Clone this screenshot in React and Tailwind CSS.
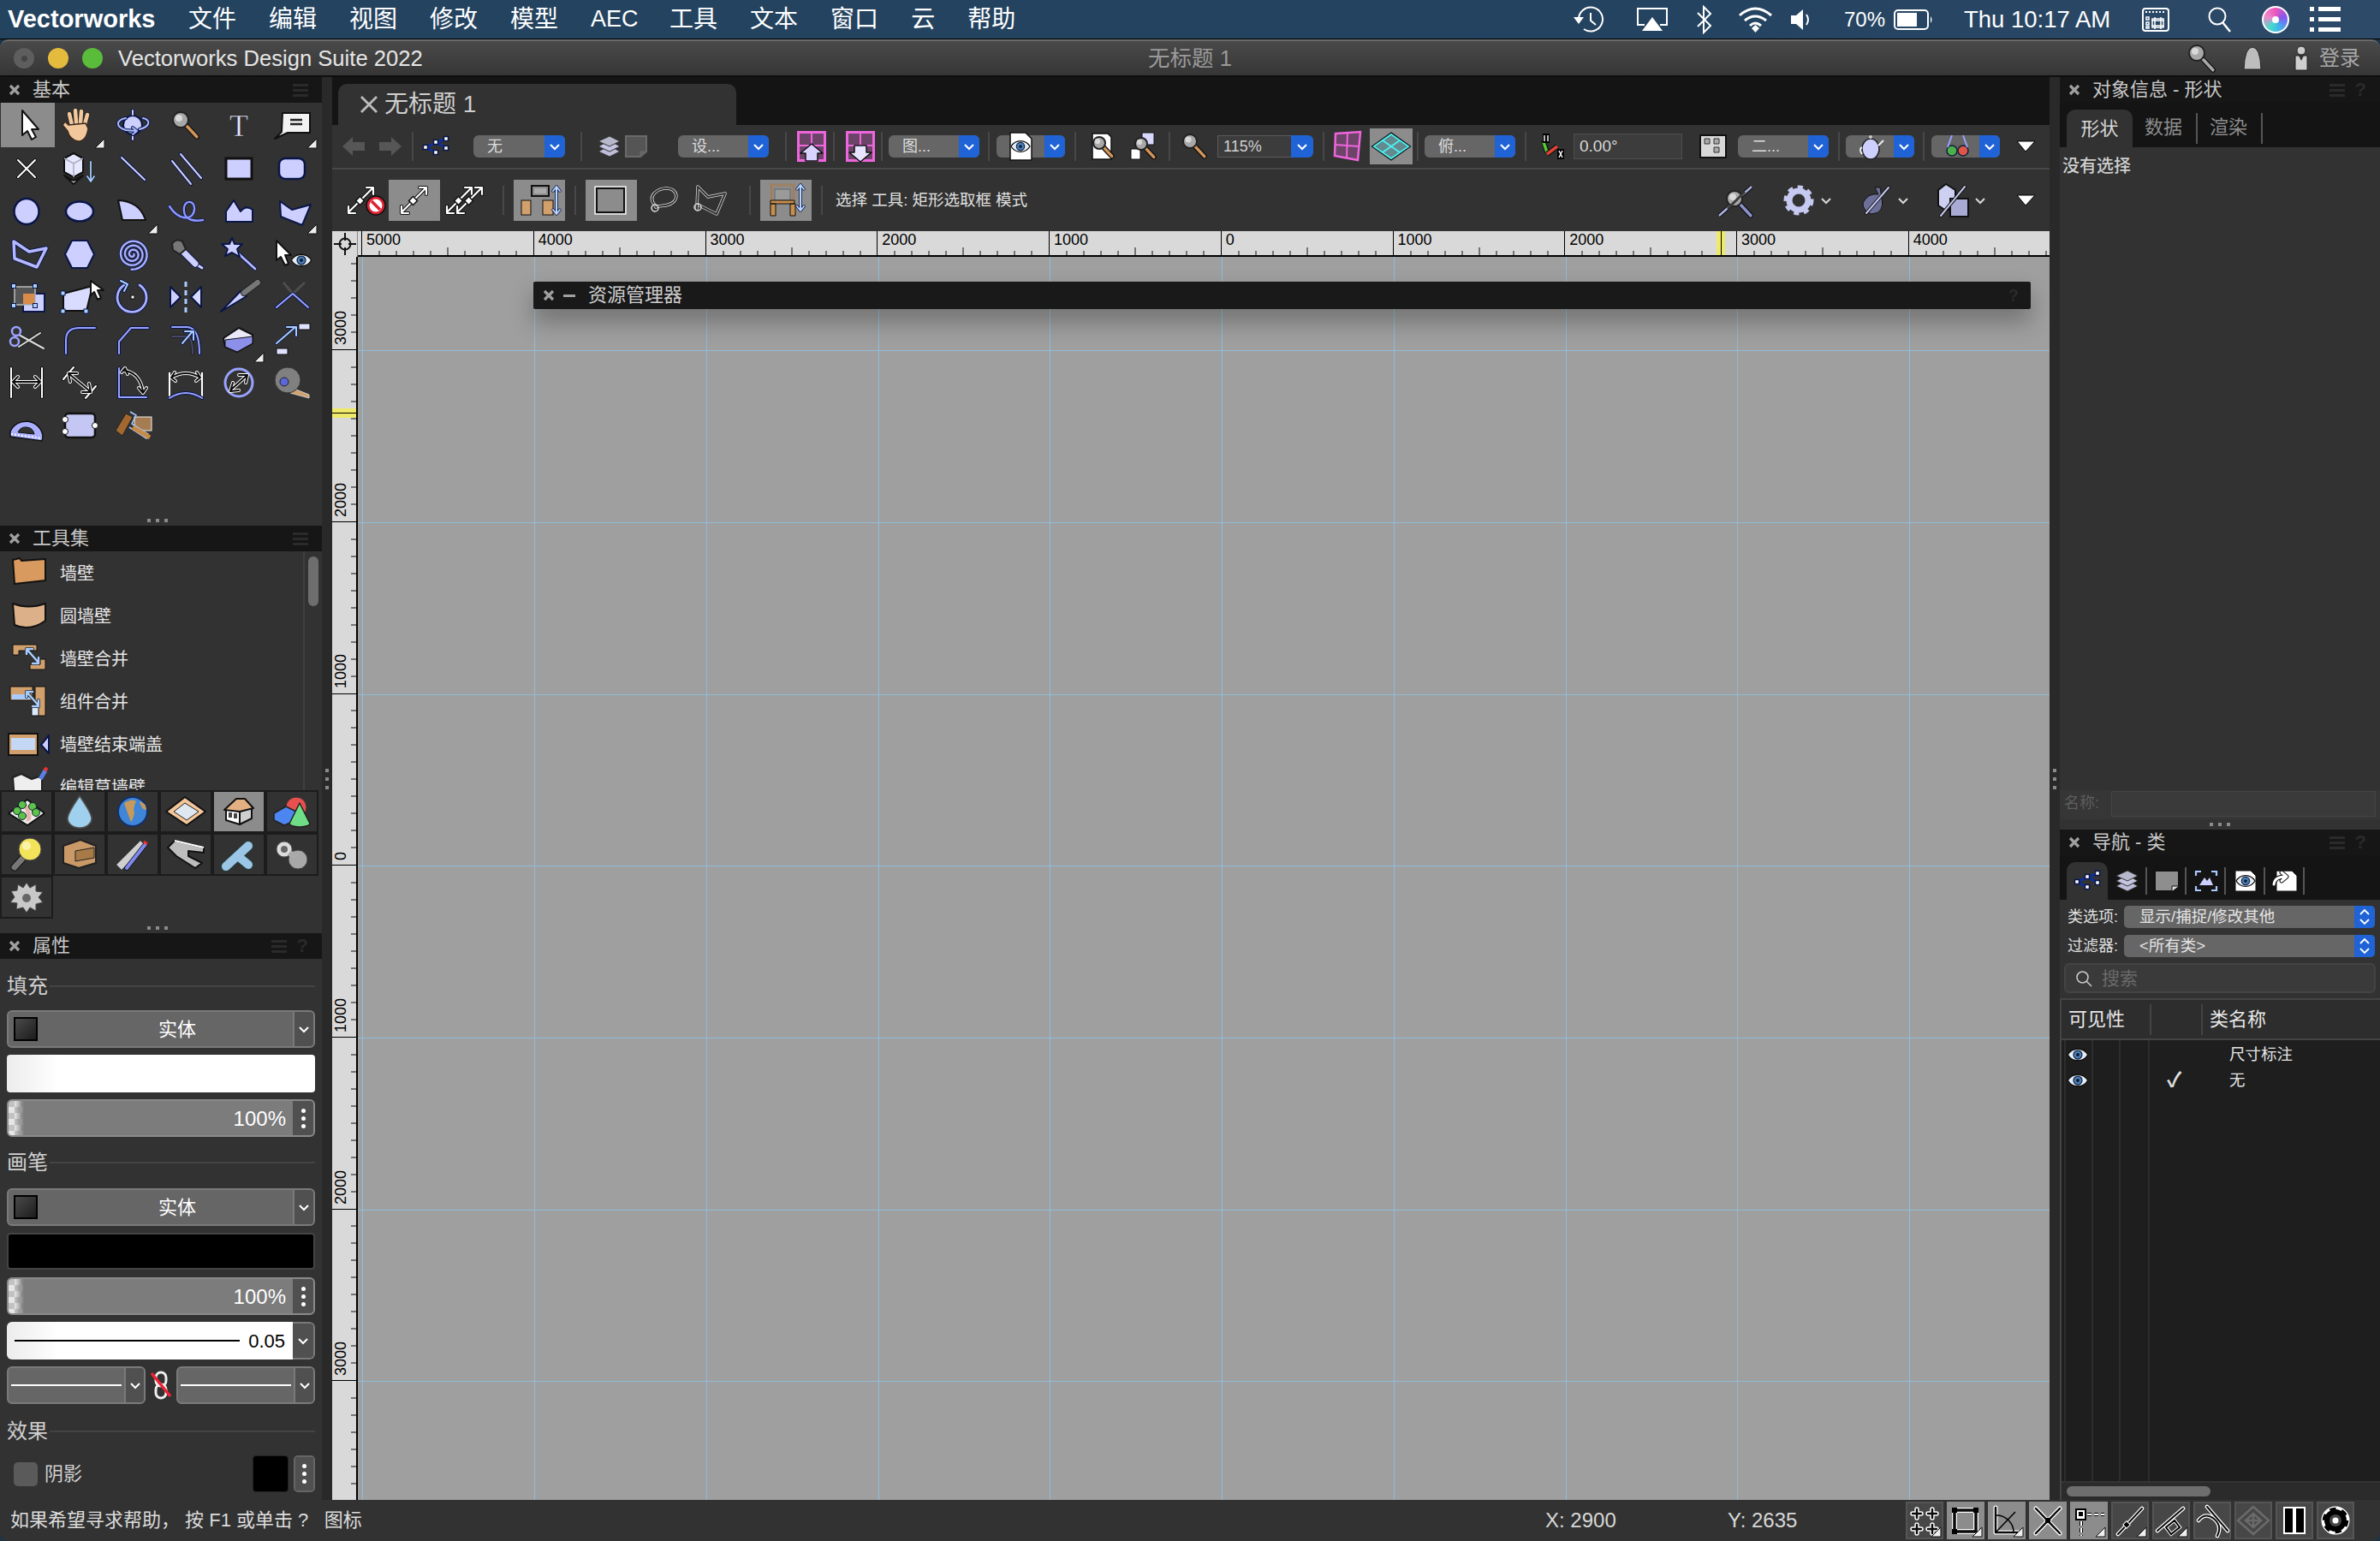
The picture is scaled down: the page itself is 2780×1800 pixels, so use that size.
import React from "react";

const L = "#cdd0ff";
const N = "#0a1648";
const W = "#ffffff";
const K = "#0b0b0b";
const P = "#ee66dd";
const O = "#d2a06c";

const Two = ({ d, c = L, o = N, w = 2, h = 2 }) => (
  <>
    <path d={d} fill="none" stroke={o} strokeWidth={w + h} strokeLinecap="round" strokeLinejoin="round" />
    <path d={d} fill="none" stroke={c} strokeWidth={w} strokeLinecap="round" strokeLinejoin="round" />
  </>
);
const Sh = ({ d, f = L, o = N, w = 2 }) => <path d={d} fill={f} stroke={o} strokeWidth={w} strokeLinejoin="round" />;
const Ic = ({ w = 44, h = 40, className = "", children }) => (
  <svg width={w} height={h} viewBox={`0 0 ${w} ${h}`} className={`shrink-0 overflow-visible ${className}`}>
    {children}
  </svg>
);
const Mag = ({ x = 12, y = 12, r = 8, h = "#d2955a" }) => (
  <>
    <path d={`M${x + r * 0.7} ${y + r * 0.7}L${x + r * 2.1} ${y + r * 2.2}`} stroke="#111" strokeWidth="6" strokeLinecap="round" />
    <path d={`M${x + r * 0.7} ${y + r * 0.7}L${x + r * 2.1} ${y + r * 2.2}`} stroke={h} strokeWidth="3.5" strokeLinecap="round" />
    <circle cx={x} cy={y} r={r} fill="#a8a8a8" stroke="#222" strokeWidth="2" />
    <circle cx={x - 2} cy={y - 2} r={r * 0.45} fill="#d8d8d8" />
  </>
);
const Eye = ({ x = 22, y = 20, s = 1 }) => (
  <g transform={`translate(${x} ${y}) scale(${s})`}>
    <path d="M-13 0C-7-10 7-10 13 0C7 10-7 10-13 0Z" fill="#e8eef5" stroke="#111" strokeWidth="1.5" />
    <circle r="5.5" fill="#4c7fb5" stroke="#13294d" strokeWidth="1.5" />
    <circle r="2.2" fill="#0c1a33" />
  </g>
);

// spiral tool outline
const spiralD = (() => {
  const pts = [];
  for (let a = 0; a <= 20.5; a += 0.25) {
    const r = 1.5 + a * 0.8;
    pts.push(`${(22 + r * Math.cos(a)).toFixed(1)} ${(20 + r * Math.sin(a)).toFixed(1)}`);
  }
  return `M${pts.join("L")}`;
})();

// basic palette tools, row by row
const tools = [
  { k: "arrow", n: <Sh d="M15 3V32L21 27L26 37L31 34L26 25L34 25Z" f={W} o="#111" /> },
  {
    k: "hand",
    tri: true,
    n: (
      <>
        <Two d="M13 20L10 7M18 17L17 3M23 17L24 4M28 19L31 8" c="#f1c79b" o="#222" w={4.5} h={1.5} />
        <Sh d="M9 20L29 18L32 24Q30 39 20 39Q10 37 8 27L2 20L5 16Z" f="#f1c79b" o="#3a2a20" w={1.5} />
      </>
    ),
  },
  {
    k: "orbit",
    n: (
      <>
        <circle cx="22" cy="20" r="11" fill={L} stroke={N} strokeWidth="2" />
        <Two d="M22 3V8M22 32V37" />
        <Two d="M30 25C42 22 44 14 34 12M14 12C3 14 1 22 14 26L26 27M22 23L27 27L22 31" c="#aebcff" />
      </>
    ),
  },
  { k: "zoom", n: <Mag x={16} y={14} r={9} /> },
  {
    k: "text",
    n: (
      <text x="22" y="33" textAnchor="middle" fontSize="36" fontFamily="Liberation Serif, serif" fill="#e8e8ff" stroke="#111" strokeWidth="0.5">
        T
      </text>
    ),
  },
  {
    k: "note",
    tri: true,
    n: (
      <>
        <Sh d="M11 6H43V29H17L2 36L10 28Z" f="#f2f2f2" o="#111" />
        <path d="M20 14H34M20 19H34" stroke="#222" strokeWidth="2.4" />
      </>
    ),
  },
  { k: "x", n: <Two d="M12 10L32 30M32 10L12 30" c={W} o="#111" /> },
  {
    k: "cube",
    n: (
      <>
        <Sh d="M4 8L15 2L26 8V24L15 30L4 24Z" f="#e6e8ff" o="#111" />
        <Sh d="M4 28L15 34L26 28L15 38Z" f="#fff" o="#111" />
        <path d="M15 14V30M4 8L15 14L26 8" stroke="#aab" fill="none" strokeWidth="1.5" />
        <Two d="M35 12V34M31 29L35 35L39 29" c="#a9ccff" o="#122" w={1.8} h={1.2} />
      </>
    ),
  },
  { k: "line", n: <Two d="M9 7L36 33" /> },
  { k: "dline", n: <Two d="M6 11L28 38M16 3L40 31" /> },
  { k: "rect", n: <rect x="7" y="8" width="30" height="24" fill={L} stroke="#111" strokeWidth="3" /> },
  { k: "rrect", n: <rect x="7" y="8" width="30" height="24" rx="7" fill={L} stroke={N} strokeWidth="2.5" /> },
  { k: "oval", n: <ellipse cx="22" cy="20" rx="14.5" ry="15" fill={L} stroke={N} strokeWidth="2.5" /> },
  { k: "ellipse", n: <ellipse cx="22" cy="20" rx="16" ry="11.5" fill={L} stroke={N} strokeWidth="2.5" /> },
  { k: "arc", tri: true, n: <Sh d="M5 7Q30 8 37 30H10Z" f={L} o="#111" /> },
  { k: "curve", n: <Two d="M3 14C13 30 30 32 32 18C33 5 18 6 20 20C21 30 32 32 42 30" c="#8f97ff" o={N} w={2.4} h={1.5} /> },
  { k: "poly", n: <Sh d="M7 32V20L16 7L24 20Q30 12 38 18V32Z" /> },
  { k: "conc", tri: true, n: <Sh d="M8 8L22 18L44 12L34 36L9 26Z" /> },
  { k: "polyl", n: <Two d="M7 5L25 17L45 13L34 35L8 25Z" c="#b4b8ff" w={3.5} h={2} /> },
  { k: "hex", n: <Sh d="M13 4H31L39 20L31 36H13L5 20Z" /> },
  { k: "spiral", n: <Two d={spiralD} c="#aab0ff" o={N} w={2.4} h={1.6} /> },
  {
    k: "dropper",
    n: (
      <>
        <Two d="M33 31L41 36" c={L} o={N} w={3} h={2} />
        <Two d="M19 17L33 31" c={L} o={N} w={7} h={2} />
        <Sh d="M6 8Q10 1 18 5L22 14L15 20L7 15Z" f="#777" o="#222" />
      </>
    ),
  },
  {
    k: "wand",
    n: (
      <>
        <Two d="M18 16L41 37" c="#b4b8ff" o={N} w={2.8} h={2} />
        <Sh d="M14 1L17 8L26 8L20 14L23 23L14 18L6 22L9 14L2 8L11 8Z" />
      </>
    ),
  },
  {
    k: "cureye",
    n: (
      <>
        <Sh d="M4 4V27L9 23L14 33L18 31L14 21L21 21Z" f={W} o="#111" />
        <Eye x={33} y={27} s={0.9} />
      </>
    ),
  },
  {
    k: "resize",
    n: (
      <>
        <rect x="18" y="16" width="25" height="21" fill={L} stroke={N} strokeWidth="2" />
        <rect x="8" y="8" width="24" height="21" fill="#555" stroke="#bbb" strokeWidth="1.5" />
        <rect x="18" y="16" width="13" height="12" fill="#d98b4a" />
        {[[7, 7], [32, 7], [7, 30], [32, 30]].map(([x, y]) => (
          <rect key={`${x}${y}`} x={x - 2.5} y={y - 2.5} width="5" height="5" fill="#a9d0ff" stroke={N} />
        ))}
      </>
    ),
  },
  {
    k: "push",
    n: (
      <>
        <Sh d="M3 16L37 7L30 36H3Z" f="#d9dcff" o="#111" />
        <rect x="0" y="34" width="5" height="5" fill="#a9d0ff" stroke={N} />
        <rect x="27" y="34" width="5" height="5" fill="#a9d0ff" stroke={N} />
        <rect x="0" y="13" width="5" height="5" fill="#a9d0ff" stroke={N} />
        <Sh d="M35 1V18L39 14L43 23L47 21L43 12L50 12Z" f={W} o="#111" />
      </>
    ),
  },
  {
    k: "rot",
    n: (
      <>
        <Two d="M30 6A17 17 0 1 1 14 5" c="#aab0ff" w={2.8} />
        <Two d="M8 1L16 5L12 13" c="#a9ccff" />
        <rect x="20" y="18" width="4" height="4" fill={W} stroke="#111" />
      </>
    ),
  },
  {
    k: "mirror",
    n: (
      <>
        <Sh d="M4 8L16 20L4 32Z" />
        <Sh d="M40 8L28 20L40 32Z" f="#d8daff" />
        <path d="M22 2V38" stroke="#a9ccff" strokeWidth="3" strokeDasharray="6 4" />
      </>
    ),
  },
  {
    k: "knife",
    n: (
      <>
        <Sh d="M1 37L24 13L31 19Z" f={L} />
        <Two d="M28 15L44 3" c="#777" o="#222" w={6} />
      </>
    ),
  },
  {
    k: "vee",
    n: (
      <>
        <path d="M12 3L23 16L37 3" fill="none" stroke="#4d4d4d" strokeWidth="3" />
        <Two d="M4 32L23 16L41 32" c="#9aa2ff" />
      </>
    ),
  },
  {
    k: "scis",
    n: (
      <>
        <Two d="M13 14L42 30M13 28L38 12" c="#ddd" o="#222" />
        <circle cx="10" cy="10" r="5" fill="none" stroke="#9aa2ff" strokeWidth="2.5" />
        <circle cx="8" cy="22" r="5" fill="none" stroke="#9aa2ff" strokeWidth="2.5" />
      </>
    ),
  },
  { k: "fillet", n: <Two d="M6 36V20Q6 6 22 6H40" c="#9aa2ff" /> },
  { k: "chamf", n: <Two d="M6 36V22L20 6H40" c="#9aa2ff" /> },
  {
    k: "offset",
    n: (
      <>
        <Two d="M6 16H22Q30 16 30 36" c="#444a70" o="#222" />
        <Two d="M6 5H24Q38 6 38 36" c="#9aa2ff" />
        <Two d="M18 24L30 10M21 10H31V20" c="#a9ccff" />
      </>
    ),
  },
  {
    k: "eraser",
    tri: true,
    n: (
      <>
        <Sh d="M4 18L22 6L38 14V24L20 34L6 28Z" f="#e8e8f8" o="#111" />
        <Sh d="M6 20L22 18L38 16V24L20 34L6 28Z" f="#8c90e8" o="#111" w={1} />
      </>
    ),
  },
  {
    k: "conn",
    n: (
      <>
        <rect x="30" y="1" width="13" height="7" fill="#dfe2ff" stroke="#111" />
        <rect x="4" y="30" width="13" height="7" fill="#dfe2ff" stroke="#111" />
        <Two d="M4 24L26 5M16 5H27V15" c="#a9ccff" w={2} h={1.5} />
      </>
    ),
  },
  {
    k: "dimh",
    n: (
      <>
        <Two d="M4 3V37M40 3V37" c={W} o="#111" />
        <Two d="M7 19H37M12 13L6 19L12 25M32 13L38 19L32 25" c={K} o={W} />
      </>
    ),
  },
  {
    k: "dimd",
    n: (
      <>
        <Two d="M3 16L15 2M29 38L41 24" c={W} o="#111" />
        <Two d="M10 10L34 30M11 19L9 9L19 9M25 31L35 31L33 21" c={K} o={W} />
      </>
    ),
  },
  {
    k: "dima",
    n: (
      <>
        <Two d="M6 3V37H38" c="#9aa2ff" />
        <Two d="M12 6Q30 8 34 30M9 8L13 3L16 10M29 26L34 32L38 26" c={K} o={W} />
      </>
    ),
  },
  {
    k: "dimar",
    n: (
      <>
        <path d="M3 8V36M41 8V36" stroke={W} strokeWidth="2" />
        <Two d="M3 38Q22 26 41 38" c="#9aa2ff" />
        <Two d="M5 14Q22 4 39 14M9 8L5 14L10 18M35 8L39 14L34 18" c={K} o={W} />
      </>
    ),
  },
  {
    k: "dimc",
    n: (
      <>
        <circle cx="22" cy="20" r="16" fill="none" stroke="#9aa2ff" strokeWidth="3" />
        <Two d="M13 28L31 12M15 20L12 30L22 29M22 11L32 11L30 20" c={K} o={W} w={2} />
      </>
    ),
  },
  {
    k: "tape",
    n: (
      <>
        <path d="M22 26L42 34V38L20 32Z" fill={O} stroke="#ccc" />
        <circle cx="17" cy="17" r="15" fill="#808080" stroke="#333" />
        <circle cx="13" cy="19" r="5" fill="#5b66d8" stroke="#222" />
      </>
    ),
  },
  {
    k: "prot",
    n: (
      <>
        <path d="M3 27A20 20 0 0 1 41 32L40 38L3 33Z" fill="#aab0ff" stroke="#111" strokeWidth="1.5" />
        <path d="M12 28A10 10 0 0 1 31 30Z" fill="#323232" stroke="#111" />
        <path d="M4 30L40 35" stroke="#fff" strokeWidth="2" strokeDasharray="2 2" />
      </>
    ),
  },
  {
    k: "lozenge",
    n: (
      <>
        <rect x="5" y="6" width="35" height="28" rx="4" fill="#c4c6f4" stroke="#111" strokeWidth="2.5" />
        <circle cx="5" cy="13" r="3.5" fill={W} stroke="#111" />
        <circle cx="5" cy="27" r="3.5" fill={W} stroke="#111" />
        <circle cx="40" cy="20" r="3.5" fill={W} stroke="#111" />
      </>
    ),
  },
  {
    k: "roller",
    n: (
      <>
        <rect x="24" y="10" width="20" height="16" fill="#a67c52" stroke="#eee" />
        <path d="M2 26L14 6L22 10L10 32Z" fill="#a2682f" stroke="#222" />
        <path d="M19 4L26 8L21 18L40 30L38 35L18 22" fill="none" stroke="#a9ccff" strokeWidth="1.5" />
        <path d="M22 22L42 34" stroke="#c98a45" strokeWidth="5" />
      </>
    ),
  },
];

const Tri = ({ className }) => (
  <svg width="13" height="13" viewBox="0 0 13 13" className={className}>
    <path d="M12 1V12H1Z" fill="#eee" stroke="#111" strokeWidth="1" />
  </svg>
);

const ToolGrid = () => (
  <div className="grid grid-cols-[repeat(6,62px)] grid-rows-[52px] auto-rows-[50px]">
    {tools.map((t, i) => (
      <div key={t.k} className={`relative flex items-center justify-center ${i === 0 ? "bg-[#8c8c8c] ml-[1px] w-[63px]" : ""}`}>
        <Ic>{t.n}</Ic>
        {t.tri && <Tri className="absolute right-[1px] bottom-[-2px]" />}
      </div>
    ))}
  </div>
);

// tool set icons
const setIcons = [
  <>
    <Sh d="M2 22L24 6L44 22L24 36Z" f="#eee" o="#111" />
    <path d="M18 12Q26 24 22 32L28 30Q30 22 24 12Z" fill="#e8b6b0" />
    <circle cx="12" cy="19" r="4.5" fill="#5cc24a" stroke="#123" />
    <circle cx="18" cy="12" r="4.5" fill="#5cc24a" stroke="#123" />
    <circle cx="18" cy="25" r="4.5" fill="#5cc24a" stroke="#123" />
    <circle cx="30" cy="14" r="4.5" fill="#5cc24a" stroke="#123" />
    <circle cx="34" cy="21" r="4.5" fill="#5cc24a" stroke="#123" />
  </>,
  <path d="M23 2Q9 22 9 28A14 11 0 0 0 37 28Q37 22 23 2Z" fill="#9fd0ee" stroke="#555" strokeWidth="1.5" />,
  <>
    <circle cx="23" cy="20" r="17" fill="#3f86d8" stroke="#14306a" strokeWidth="2" />
    <path d="M13 10Q23 4 27 8Q23 16 25 22Q23 30 21 32Q17 22 13 10Z M31 8Q39 10 39 18Q33 18 31 8Z" fill="#c79a5c" />
  </>,
  <>
    <Sh d="M0 20L22 3L46 20L24 36Z" f="#f4c79a" o="#111" />
    <path d="M9 20L22 10L38 20L24 30Z" fill="#dfe8f0" stroke="#222" />
  </>,
  <>
    <Sh d="M8 17L24 20V35L8 30Z" f="#fff" o="#111" />
    <Sh d="M24 20L38 15V28L24 35Z" f="#cfcfcf" o="#111" />
    <Sh d="M6 18L20 5H30L40 16L24 20Z" f="#e3b083" o="#111" />
    <rect x="11" y="21" width="4" height="6" fill="#444" />
    <rect x="17" y="22" width="4" height="6" fill="#444" />
  </>,
  <>
    <circle cx="28" cy="15" r="12" fill="#e85050" stroke="#333" />
    <Sh d="M2 22L16 14L28 20V30L14 36L2 30Z" f="#4d86f0" o="#222" w={1.5} />
    <Sh d="M32 10L44 34A12 4 0 0 1 20 34Z" f="#6fdc86" o="#222" w={1.5} />
  </>,
  <>
    <Two d="M19 24L9 35" c="#777" o="#111" w={7} />
    <circle cx="27" cy="14" r="13" fill="#f3e35b" stroke="#444" />
    <circle cx="23" cy="10" r="5" fill="#fbf4a8" />
  </>,
  <>
    <Sh d="M4 10L24 3L42 10V30L22 36L4 30Z" f="#c99a68" o="#222" />
    <path d="M18 16L40 12V24L18 28Z" fill="#a87a48" stroke="#222" />
  </>,
  <>
    <Sh d="M4 32L32 4L38 10L10 38Z" f="#cfcfcf" o="#666" w={1} />
    <Two d="M16 36L38 8" c="#7e88f0" o="#111" w={4} h={1.5} />
    <path d="M36 5L40 8" stroke="#e33" strokeWidth="3" />
  </>,
  <>
    <Sh d="M2 12L12 22L34 36L42 30L26 22V16L44 18V12L10 4Z" f="#bdbdbd" o="#111" />
    <path d="M10 4L44 12" stroke="#fff" strokeWidth="2" />
  </>,
  <Two d="M8 34L34 10M22 22L34 32" c="#9bc6e6" o="#244" w={10} h={1.5} />,
  <>
    <circle cx="30" cy="26" r="11" fill="#a8a8a8" stroke="#444" />
    <circle cx="14" cy="14" r="9" fill="#ddd" stroke="#555" />
    <circle cx="14" cy="14" r="4" fill="#666" />
    <path d="M20 18L28 24" stroke="#aaa" strokeWidth="7" />
  </>,
  <>
    <path d="M23 3L27 9L34 5L34 13L42 14L37 20L42 26L34 28L34 36L27 32L23 38L19 32L11 34L12 27L4 26L9 20L5 13L12 12L13 5L19 9Z" fill="#c8c8c8" stroke="#444" />
    <circle cx="23" cy="21" r="5" fill="#666" />
  </>,
];

const ToolSetGrid = () => (
  <div className="grid grid-cols-[repeat(6,62px)] auto-rows-[50px] h-[150px]">
    {setIcons.map((n, i) => (
      <div
        key={i}
        className={`flex items-center justify-center border-2 border-[#1c1c1c] ${i === 4 ? "bg-[#8c8c8c]" : "bg-[#323232]"}`}
      >
        <Ic w={46} h={40}>{n}</Ic>
      </div>
    ))}
  </div>
);

const listIcons = [
  <Sh key="a" d="M2 4L10 2L12 5L40 3V28L4 32Z" f="#d99a5f" o="#111" />,
  <Sh key="b" d="M2 5Q20 12 40 5V25Q22 38 4 30Z" f="#dcb088" o="#111" />,
  <g key="c">
    <path d="M2 3H30L30 10H9V15H2Z" fill={O} stroke="#111" />
    <path d="M34 20H40V32H22V26H34Z" fill={O} stroke="#111" />
    <Two d="M18 8L32 24M18 14V8H25M32 18V25H25" c="#a9ccff" o="#222" w={2.5} h={1.5} />
  </g>,
  <g key="d" transform="translate(-2 0)">
    <rect x="1" y="2" width="26" height="16" fill={O} stroke="#111" />
    <rect x="3" y="11" width="22" height="6" fill="#a9ccff" />
    <rect x="30" y="2" width="12" height="34" fill={O} stroke="#111" />
    <rect x="26" y="24" width="8" height="12" fill="#dbe9ff" stroke="#111" />
    <Two d="M20 8L34 24M20 14V8H27M34 18V25H27" c="#a9ccff" o="#222" w={2.5} h={1.5} />
  </g>,
  <g key="e" transform="translate(-5 0)">
    <rect x="2" y="7" width="34" height="25" fill={O} stroke="#111" strokeWidth="2" />
    <rect x="5" y="12" width="28" height="14" fill="#c4d8f5" />
    <Sh d="M49 9V30L40 20Z" f={L} />
  </g>,
  <g key="f">
    <Sh d="M2 8L12 4L24 10L36 6V34H4Z" f="#eee" o="#222" />
    <path d="M34 10L40 0" stroke="#5a80e8" strokeWidth="5" />
    <path d="M39 0L42 -3" stroke="#e33" strokeWidth="4" />
  </g>,
];

const listRows = ["墙壁", "圆墙壁", "墙壁合并", "组件合并", "墙壁结束端盖", "编辑草墙壁"];

const ToolSetList = () => (
  <div className="flex h-[279px] overflow-hidden">
    <div className="w-[354px] flex flex-col pt-[1px]">
      {listRows.map((t, i) => (
        <div key={t} className="h-[50px] shrink-0 flex items-center">
          <Ic w={52} h={40} className="ml-[13px] mr-[5px]">{listIcons[i]}</Ic>
          <span className="text-[20px] text-[#e6e6e6]">{t}</span>
        </div>
      ))}
    </div>
    <div className="w-[22px] border-l-2 border-[#3f3f3f] bg-[#323232] pt-[6px] pl-[4px]">
      <div className="w-[12px] h-[58px] rounded-full bg-[#6e6e6e]" />
    </div>
  </div>
);

const Burger = ({ className = "" }) => (
  <div className={`w-[18px] flex flex-col gap-[3px] ${className}`}>
    <div className="h-[3px] bg-[#2a2a2a]" />
    <div className="h-[3px] bg-[#2a2a2a]" />
    <div className="h-[3px] bg-[#2a2a2a]" />
  </div>
);

const Close = ({ className = "" }) => (
  <svg width="14" height="14" viewBox="0 0 14 14" className={`shrink-0 ${className}`}>
    <path d="M2 2L12 12M12 2L2 12" stroke="#a0a0a0" strokeWidth="3.2" />
  </svg>
);

const PanelHead = ({ title, help }) => (
  <div className="h-[30px] shrink-0 flex items-center bg-[#161616] pl-[10px] pr-[16px]">
    <Close className="mr-[14px]" />
    <span className="text-[22px] leading-none text-[#c8c8c8]">{title}</span>
    <Burger className="ml-auto" />
    {help && <span className="ml-[12px] text-[22px] font-bold leading-none text-[#2a2a2a]">?</span>}
  </div>
);

const Dots = ({ className = "" }) => (
  <div className={`h-[12px] shrink-0 flex items-center justify-center gap-[6px] ${className}`}>
    <div className="w-[4px] h-[4px] bg-[#8a8a8a]" />
    <div className="w-[4px] h-[4px] bg-[#8a8a8a]" />
    <div className="w-[4px] h-[4px] bg-[#8a8a8a]" />
  </div>
);

const Chev = ({ c = "#fff", className = "" }) => (
  <svg width="14" height="9" viewBox="0 0 14 9" className={`shrink-0 ${className}`}>
    <path d="M2 2L7 7L12 2" fill="none" stroke={c} strokeWidth="2" />
  </svg>
);

const Section = ({ title, className }) => (
  <div className={`h-[32px] flex items-center ${className}`}>
    <span className="text-[24px] leading-none text-[#d0d0d0]">{title}</span>
    <div className="flex-1 h-[2px] ml-[2px] bg-[#444444]" />
  </div>
);

const Swatch = () => <div className="w-[28px] h-[28px] shrink-0 border-2 border-black bg-[linear-gradient(135deg,#4a4a4a,#1c1c1c)]" />;

const PropSelect = ({ className = "" }) => (
  <div className={`h-[44px] flex rounded-[6px] border-2 border-[#7a7a7a] bg-[#666666] overflow-hidden ${className}`}>
    <div className="flex-1 flex items-center pl-[6px] border-r-2 border-[#7a7a7a]">
      <Swatch />
      <span className="flex-1 text-center text-[22px] text-white pl-[28px]">实体</span>
    </div>
    <div className="w-[22px] flex items-center justify-center bg-[#505050]">
      <Chev />
    </div>
  </div>
);

const VDots = () => (
  <div className="w-[24px] self-stretch flex flex-col items-center justify-center gap-[4px] bg-[#505050]">
    <div className="w-[5px] h-[5px] rounded-full bg-white" />
    <div className="w-[5px] h-[5px] rounded-full bg-white" />
    <div className="w-[5px] h-[5px] rounded-full bg-white" />
  </div>
);

const Opacity = ({ className = "" }) => (
  <div className={`h-[44px] flex rounded-[6px] border-2 border-[#8a8a8a] bg-[#7c7c7c] overflow-hidden ${className}`}>
    <div className="relative w-[18px] bg-[repeating-conic-gradient(#e6e6e6_0_25%,#c2c2c2_0_50%)] bg-[length:14px_14px]">
      <div className="absolute inset-0 bg-[linear-gradient(90deg,transparent_40%,#7c7c7c)]" />
    </div>
    <span className="flex-1 text-right pr-[8px] text-[24px] leading-[42px] text-white">100%</span>
    <VDots />
  </div>
);

const ArrowSelect = () => (
  <div className="w-[162px] h-[44px] flex rounded-[6px] border-2 border-[#7a7a7a] bg-[#666666] overflow-hidden">
    <div className="flex-1 flex items-center px-[3px]">
      <div className="w-full h-[2px] bg-white" />
    </div>
    <div className="w-[23px] flex items-center justify-center border-l-2 border-[#7a7a7a] bg-[#505050]">
      <Chev />
    </div>
  </div>
);

const Attributes = () => (
  <div className="flex-1 px-[8px]">
    <Section title="填充" className="mt-[16px]" />
    <PropSelect className="mt-[12px]" />
    <div className="mt-[8px] h-[44px] rounded-[4px] bg-[linear-gradient(90deg,#ececec,#fff_60px)]" />
    <Opacity className="mt-[8px]" />
    <Section title="画笔" className="mt-[14px]" />
    <PropSelect className="mt-[14px]" />
    <div className="mt-[8px] h-[43px] rounded-[4px] bg-black border-2 border-[#444444]" />
    <Opacity className="mt-[9px]" />
    <div className="mt-[8px] h-[44px] flex rounded-[6px] overflow-hidden">
      <div className="flex-1 flex items-center pl-[9px] pr-[9px] bg-[linear-gradient(90deg,#ececec,#fff_60px)]">
        <div className="w-[263px] h-[2px] bg-black" />
        <span className="ml-auto text-[22px] text-black">0.05</span>
      </div>
      <div className="w-[26px] flex items-center justify-center bg-[#505050] border-2 border-l-0 border-[#7a7a7a] rounded-r-[6px]">
        <Chev />
      </div>
    </div>
    <div className="mt-[8px] flex items-center">
      <ArrowSelect />
      <svg width="36" height="40" viewBox="0 0 36 40" className="shrink-0">
        <rect x="12" y="5" width="12" height="16" rx="6" fill="none" stroke="#eee" strokeWidth="3" />
        <rect x="12" y="19" width="12" height="16" rx="6" fill="none" stroke="#eee" strokeWidth="3" />
        <path d="M7 6L29 33" stroke="#ee2233" strokeWidth="3.5" />
      </svg>
      <ArrowSelect />
    </div>
    <Section title="效果" className="mt-[16px]" />
    <div className="mt-[12px] h-[43px] flex items-center">
      <div className="ml-[8px] w-[28px] h-[28px] rounded-[5px] bg-[#5a5a5a]" />
      <span className="ml-[8px] text-[22px] text-[#d0d0d0]">阴影</span>
      <div className="ml-auto w-[42px] h-[43px] rounded-[4px] bg-black border border-[#222]" />
      <div className="ml-[6px] w-[25px] h-[43px] rounded-[5px] border-2 border-[#666] bg-[#4a4a4a] overflow-hidden flex">
        <VDots />
      </div>
    </div>
  </div>
);

const LeftColumn = () => (
  <div className="w-[376px] shrink-0 flex flex-col bg-[#323232]">
    <PanelHead title="基本" />
    <div className="h-[482px] shrink-0">
      <ToolGrid />
    </div>
    <Dots className="pr-[8px]" />
    <PanelHead title="工具集" />
    <ToolSetList />
    <ToolSetGrid />
    <div className="h-[5px] shrink-0" />
    <Dots className="pr-[8px]" />
    <PanelHead title="属性" help />
    <Attributes />
  </div>
);

const GutterDots = ({ top }) => (
  <div className={`w-[12px] shrink-0 flex flex-col items-center gap-[6px] bg-[#292929] ${top}`}>
    <div className="w-[4px] h-[4px] bg-[#8a8a8a]" />
    <div className="w-[4px] h-[4px] bg-[#8a8a8a]" />
    <div className="w-[4px] h-[4px] bg-[#8a8a8a]" />
  </div>
);

const Div = ({ className = "" }) => <div className={`w-[2px] h-[34px] shrink-0 -mr-[1px] bg-[#484848] ${className}`} />;

const Drop = ({ w, label, children, className = "" }) => (
  <div className={`h-[26px] shrink-0 flex rounded-[6px] overflow-hidden bg-[#666666] ${w} ${className}`}>
    <div className="flex-1 flex items-center pl-[16px] text-[18px] leading-none text-[#dcdcdc] relative">
      {label}
      {children}
    </div>
    <div className="w-[24px] flex items-center justify-center bg-[#1f63d6]">
      <Chev />
    </div>
  </div>
);

const DropIcon = ({ w = "w-[80px]", className = "", children }) => (
  <div className={`relative h-[26px] shrink-0 ${w} ${className}`}>
    <div className="h-full flex rounded-[6px] overflow-hidden bg-[#666666]">
      <div className="flex-1" />
      <div className="w-[24px] flex items-center justify-center bg-[#1f63d6]">
        <Chev />
      </div>
    </div>
    <div className="absolute left-[15px] top-[-4px]">{children}</div>
  </div>
);

const Grid4 = ({ up }) => (
  <Ic w={34} h={36}>
    <rect x="1.5" y="1.5" width="31" height="33" fill="#6b4468" stroke={P} strokeWidth="3" />
    <path d="M17 1V34M1 17H33" stroke={P} strokeWidth="2" />
    {up ? (
      <Sh d="M17 15L30 26H24V35H10V26H4Z" f="#d9d4ff" o="#111" w={1.5} />
    ) : (
      <Sh d="M17 36L30 25H24V17H10V25H4Z" f="#e8e4ff" o="#111" w={1.5} />
    )}
  </Ic>
);

const ClassIcon = ({ w = 32, h = 24 }) => (
  <Ic w={w} h={h}>
    <path d="M4 13L28 3M4 13L16 19M16 7L28 14" fill="none" stroke="#0e2f9a" strokeWidth="3" />
    {[[4, 13], [16, 7], [28, 3], [16, 19], [28, 14]].map(([x, y]) => (
      <rect key={`${x}-${y}`} x={x - 2.5} y={y - 2.5} width="5" height="5" fill="#fff" stroke="#0a1648" strokeWidth="1.5" />
    ))}
  </Ic>
);

const LayersIcon = ({ w = 27, h = 26 }) => (
  <Ic w={w} h={h}>
    <Sh d="M1 19L14 12L26 19L14 25Z" f="#bdbdd8" o="#333" w={1} />
    <Sh d="M1 13L14 6L26 13L14 19Z" f="#c6c6e4" o="#333" w={1} />
    <Sh d="M1 7L14 1L26 7L14 13Z" f="#b8b8cc" o="#333" w={1} />
  </Ic>
);

const TopBar = () => (
  <div className="h-[50px] shrink-0 flex items-center">
    <Ic w={27} h={24} className="ml-[11px]"><path d="M1 12L13 1V7H27V17H13V23Z" fill="#565656" /></Ic>
    <Ic w={28} h={24} className="ml-[16px]"><path d="M27 12L15 1V7H1V17H15V23Z" fill="#565656" /></Ic>
    <Div className="ml-[11px]" />
    <div className="ml-[11px]"><ClassIcon /></div>
    <Drop w="w-[107px] ml-[28px]" label="无" />
    <Div className="ml-[18px]" />
    <div className="ml-[19px]"><LayersIcon /></div>
    <Ic w={30} h={28} className="ml-[3px]">
      <path d="M3 2H27V20L20 26H3Z" fill="#555" stroke="#6a6a6a" strokeWidth="2" />
      <path d="M20 26V20H27" fill="#666" stroke="#6a6a6a" strokeWidth="1" />
    </Ic>
    <Drop w="w-[106px] ml-[34px]" label="设..." />
    <Div className="ml-[19px]" />
    <div className="ml-[13px]"><Grid4 up /></div>
    <Div className="ml-[8px]" />
    <div className="ml-[14px]"><Grid4 /></div>
    <Div className="ml-[7px]" />
    <Drop w="w-[106px] ml-[8px]" label="图..." />
    <Div className="ml-[10px]" />
    <DropIcon className="ml-[9px]">
      <Ic w={27} h={34}>
        <path d="M1 1H19L26 8V33H1Z" fill="#fff" stroke="#111" strokeWidth="1.5" />
        <Eye x={13} y={17} s={0.85} />
      </Ic>
    </DropIcon>
    <Div className="ml-[11px]" />
    <Ic w={26} h={34} className="ml-[18px]">
      <path d="M2 2H20L24 6V32H2Z" fill="#fff" stroke="#111" strokeWidth="1.5" />
      <Mag x={10} y={13} r={7} />
    </Ic>
    <Ic w={30} h={34} className="ml-[20px]">
      <rect x="14" y="1" width="14" height="14" fill="#d8d8ff" stroke="#111" />
      <rect x="1" y="20" width="11" height="12" fill="#fff" stroke="#111" />
      <Mag x={13} y={14} r={7} />
    </Ic>
    <Div className="ml-[15px]" />
    <Ic w={26} h={34} className="ml-[15px]"><Mag x={9} y={11} r={8} /></Ic>
    <div className="ml-[15px] w-[112px] h-[26px] shrink-0 flex rounded-r-[6px] overflow-hidden bg-[#3c3c3c]">
      <div className="flex-1 flex items-center pl-[6px] border border-r-0 border-[#5a5a5a] text-[18px] text-[#d0d0d0]">115%</div>
      <div className="w-[26px] flex items-center justify-center bg-[#1f63d6]"><Chev /></div>
    </div>
    <Div className="ml-[11px]" />
    <Ic w={32} h={36} className="ml-[12px]">
      <path d="M2 3L31 1L28 34L1 29Z" fill="#6b4468" stroke={P} strokeWidth="2.5" />
      <path d="M16 2L15 31M1 16L30 18" stroke={P} strokeWidth="2" />
    </Ic>
    <div className="ml-[10px] w-[50px] h-[42px] shrink-0 flex items-center justify-center bg-[#8c8c8c]">
      <Ic w={44} h={32}>
        <path d="M22 1L43 16L22 31L1 16Z" fill="#64898e" stroke="#111" strokeWidth="3" />
        <path d="M22 2L42 16L22 30L2 16ZM12 9L32 23M32 9L12 23" fill="none" stroke="#4ff0f0" strokeWidth="2" />
      </Ic>
    </div>
    <Div className="ml-[5px]" />
    <Drop w="w-[106px] ml-[8px]" label="俯..." />
    <Div className="ml-[11px]" />
    <Ic w={32} h={30} className="ml-[13px]">
      <path d="M8 8L12 22" stroke="#111" strokeWidth="6" />
      <path d="M8 10L12 22" stroke="#55cc33" strokeWidth="3.5" />
      <path d="M12 24L24 15" stroke="#111" strokeWidth="6" />
      <path d="M12 24L24 15" stroke="#dd4433" strokeWidth="3.5" />
      <rect x="7" y="0" width="8" height="11" fill="#000" />
      <path d="M9 2V9M13 2V9" stroke="#fff" strokeWidth="1.4" />
      <rect x="24" y="18" width="8" height="12" fill="#000" />
      <path d="M26 20L30 28M30 20L26 28" stroke="#fff" strokeWidth="1.4" />
    </Ic>
    <div className="ml-[11px] w-[127px] h-[30px] shrink-0 flex items-center pl-[6px] bg-[#3c3c3c] border border-[#4e4e4e] text-[19px] text-[#d8d8d8]">
      0.00°
    </div>
    <Ic w={32} h={28} className="ml-[20px]">
      <rect x="1" y="1" width="30" height="26" fill="#d8d8d8" stroke="#111" strokeWidth="2" />
      <path d="M6 5H12V11H6ZM17 5H23V11H17ZM17 15H23V21H17Z" fill="#aaa" stroke="#333" />
    </Ic>
    <Drop w="w-[106px] ml-[13px]" label="二..." />
    <Div className="ml-[11px]" />
    <DropIcon className="ml-[8px]">
      <Ic w={30} h={34}>
        <ellipse cx="14" cy="20" rx="10" ry="12" fill={L} stroke="#222" strokeWidth="1.5" />
        <path d="M23 16L29 10M4 18Q0 20 4 26" stroke="#eee" strokeWidth="2" fill="none" />
        <circle cx="14" cy="6" r="2" fill="#ccc" />
      </Ic>
    </DropIcon>
    <Div className="ml-[10px]" />
    <DropIcon className="ml-[9px]">
      <Ic w={30} h={34}>
        <circle cx="9" cy="22" r="6" fill="#4caf50" stroke="#123" strokeWidth="1.5" />
        <circle cx="22" cy="22" r="6" fill="#e0544a" stroke="#123" strokeWidth="1.5" />
        <path d="M4 18L9 4M27 18L22 4" stroke="#9aa2ff" strokeWidth="2" />
      </Ic>
    </DropIcon>
    <Ic w={23} h={14} className="ml-[19px]"><path d="M1 1H22L11 13Z" fill="#fff" stroke="#000" /></Ic>
  </div>
);

const Selected = ({ className = "", children }) => (
  <div className={`w-[60px] h-[48px] shrink-0 flex items-center justify-center bg-[#8c8c8c] ${className}`}>{children}</div>
);

const NodeLine = ({ dx = 0 }) => (
  <g transform={`translate(${dx} 0)`}>
    <Two d="M3 32L31 4M24 3H32V11M3 25V33H11" c={W} o="#111" w={2.2} h={2} />
    <rect x="13" y="15" width="7" height="7" transform="rotate(45 16.5 18.5)" fill={W} stroke="#111" strokeWidth="1.5" />
  </g>
);

const SubBar = () => (
  <div className="h-[74px] shrink-0 flex items-center border-t-2 border-[#484848]">
    <Ic w={46} h={36} className="ml-[16px]">
      <NodeLine />
      <circle cx="35" cy="24" r="11" fill="#dd2233" stroke="#111" strokeWidth="1.5" />
      <circle cx="35" cy="24" r="7.5" fill="#fff" />
      <path d="M30 19L40 29" stroke="#dd2233" strokeWidth="3.5" />
    </Ic>
    <Selected className="ml-[4px]">
      <Ic w={36} h={36}><NodeLine /></Ic>
    </Selected>
    <Ic w={46} h={36} className="ml-[5px]">
      <NodeLine />
      <NodeLine dx={12} />
    </Ic>
    <Div className="ml-[22px]" />
    <Selected className="ml-[12px]">
      <Ic w={50} h={40}>
        <rect x="16" y="3" width="20" height="12" fill="none" stroke="#111" strokeWidth="2" />
        <rect x="19" y="6" width="14" height="6" fill="#aaa" />
        <rect x="4" y="20" width="11" height="17" fill={O} stroke="#111" />
        <rect x="29" y="20" width="12" height="17" fill={O} stroke="#111" />
        <Two d="M45 4V36M41 9L45 4L49 9M41 31L45 36L49 31" c="#b9d6ff" o={N} w={2} h={1.5} />
      </Ic>
    </Selected>
    <Div className="ml-[11px]" />
    <Selected className="ml-[12px]">
      <Ic w={50} h={36}>
        <rect x="6" y="2" width="36" height="32" fill="#8c8c8c" stroke="#eee" strokeWidth="1.5" />
        <rect x="8" y="4" width="32" height="28" fill="#8c8c8c" stroke="#111" strokeWidth="2" />
      </Ic>
    </Selected>
    <Ic w={35} h={36} className="ml-[13px]">
      <Two d="M8 24C-2 12 12 4 22 4C34 4 38 18 24 23C18 25 12 24 9 26" c="#333" o="#ddd" w={2} h={1.5} />
      <circle cx="8" cy="27" r="4" fill="none" stroke="#ddd" strokeWidth="1.5" />
    </Ic>
    <Ic w={40} h={36} className="ml-[17px]">
      <Two d="M5 28L6 2L18 14L38 10L28 34L8 24" c="#333" o="#ddd" w={2} h={1.5} />
      <circle cx="6" cy="26" r="4" fill="none" stroke="#ddd" strokeWidth="1.5" />
    </Ic>
    <Div className="ml-[26px]" />
    <Selected className="ml-[12px]">
      <Ic w={50} h={40}>
        <path d="M8 2H34V20H8Z" fill="none" stroke="#9e8060" strokeWidth="3" />
        <rect x="12" y="7" width="18" height="13" fill="#9a9a9a" stroke="#666" />
        <path d="M7 20H35V24H7ZM7 24H13V38H7ZM30 24H36V38H30Z" fill="#c78f4c" stroke="#111" />
        <Two d="M42 2V32M38 7L42 2L46 7M38 27L42 32L46 27" c="#b9d6ff" o={N} w={2} h={1.5} />
      </Ic>
    </Selected>
    <Div className="ml-[11px]" />
    <span className="ml-[16px] text-[18.5px] text-[#e0e0e0]">选择 工具: 矩形选取框 模式</span>
    <div className="flex-1" />
    <Ic w={50} h={40}>
      <path d="M4 38L42 4" stroke="#111" strokeWidth="5" />
      <path d="M4 38L42 4" stroke="#aab0dd" strokeWidth="2.5" />
      <Mag x={22} y={18} r={9} h="#8c93cc" />
      <path d="M14 30L34 10" stroke="#3a3a3a" strokeWidth="3" />
    </Ic>
    <Ic w={36} h={38} className="ml-[29px]">
      <circle cx="18" cy="19" r="11" fill="none" stroke="#c6c9f0" strokeWidth="7" />
      <circle cx="18" cy="19" r="15" fill="none" stroke="#c6c9f0" strokeWidth="5" strokeDasharray="6 5.5" />
      <circle cx="18" cy="19" r="3" fill="#333" />
    </Ic>
    <Chev c="#d8d8d8" className="ml-[7px]" />
    <Ic w={38} h={38} className="ml-[32px]">
      <path d="M4 22Q10 10 22 12L18 4H24L26 16Q30 34 14 35Q4 32 4 22Z" fill="#6c7099" stroke="#111" />
      <Two d="M8 34L34 4" c="#c6c9f0" o="#111" w={2} />
    </Ic>
    <Chev c="#d8d8d8" className="ml-[6px]" />
    <Ic w={37} h={40} className="ml-[33px]">
      <Sh d="M1 8L10 1L21 8V26L10 32L1 26Z" f="#cdd0f0" o="#111" />
      <rect x="15" y="18" width="21" height="21" fill="#a8abd4" stroke="#111" strokeWidth="2" />
      <Two d="M4 38L32 4" c="#c6c9f0" o="#111" w={2} />
    </Ic>
    <Chev c="#d8d8d8" className="ml-[6px]" />
    <Ic w={23} h={14} className="ml-[35px] mr-[16px]"><path d="M1 1H22L11 13Z" fill="#fff" stroke="#000" /></Ic>
  </div>
);

const TopTicks = () => (
  <svg width="200" height="9" viewBox="0 0 200 9" className="shrink-0">
    {[20, 40, 60, 80, 100, 120, 140, 160, 180].map((x) => (
      <path key={x} d={`M${x} ${x === 100 ? 0 : 4}V9`} stroke="#111" strokeWidth="1" />
    ))}
  </svg>
);

const SideTicks = () => (
  <svg width="6" height="200" viewBox="0 0 6 200" className="shrink-0">
    {[20, 40, 60, 80, 100, 120, 140, 160, 180].map((y) => (
      <path key={y} d={`M0 ${200 - y}H6`} stroke="#111" strokeWidth="1" />
    ))}
  </svg>
);

const topLabels = ["5000", "4000", "3000", "2000", "1000", "0", "1000", "2000", "3000", "4000"];

const TopRuler = () => (
  <div className="h-[30px] shrink-0 flex">
    <div className="w-[30px] shrink-0 flex items-center justify-center bg-[#d9d9d9] border-r border-[#888]">
      <svg width="26" height="26" viewBox="0 0 26 26">
        <circle cx="13" cy="13" r="6.5" fill="none" stroke="#111" strokeWidth="2" />
        <path d="M13 0V9M13 17V26M0 13H9M17 13H26" stroke="#111" strokeWidth="2" />
      </svg>
    </div>
    <div className="relative flex-1 flex bg-[#d9d9d9] border-b-2 border-black overflow-hidden pl-[4px]">
      {topLabels.map((t, i) => (
        <div key={i} className="w-[200.75px] shrink-0 flex flex-col border-l border-black">
          <span className="h-[19px] pl-[5px] pt-[1px] text-[18px] leading-[19px] text-black">{t}</span>
          <TopTicks />
        </div>
      ))}
      <div className="absolute left-[1587px] top-0 bottom-0 w-[10px] bg-[#efe96a] flex justify-center">
        <div className="w-[1px] bg-black" />
      </div>
    </div>
  </div>
);

const sideSegs = [
  ["3000", "h-[109px]"],
  ["2000", "h-[201px]"],
  ["1000", "h-[200.5px]"],
  ["0", "h-[200.5px]"],
  ["1000", "h-[201px]"],
  ["2000", "h-[201px]"],
  ["3000", "h-[200px]"],
];

const SideRuler = () => (
  <div className="relative w-[30px] h-[1452px] shrink-0 flex flex-col bg-[#d9d9d9] border-r-2 border-black overflow-hidden">
    {sideSegs.map(([t, h], i) => (
      <div key={i} className={`${h} shrink-0 flex items-end justify-end border-b border-black`}>
        <span className="[writing-mode:vertical-rl] rotate-180 text-[18px] leading-[14px] w-[14px] mr-[5px] mb-[5px] text-black">{t}</span>
        <SideTicks />
      </div>
    ))}
    <div className="flex-1 flex justify-end"><SideTicks /></div>
    <div className="absolute left-0 right-0 top-[177px] h-[11px] bg-[#efe96a] flex items-center">
      <div className="w-full h-[1px] bg-black" />
    </div>
  </div>
);

const gridX = [5, 206, 407, 608, 808, 1009, 1210, 1411, 1611, 1812];
const gridY = [109, 310, 511, 711, 912, 1113, 1313];

const Canvas = () => (
  <div className="relative flex-1 bg-[#9f9f9f] overflow-hidden">
    <svg width="1976" height="1452" className="absolute inset-0">
      {gridX.map((x) => <path key={x} d={`M${x + 0.5} 0V1452`} stroke="#90bcd8" strokeWidth="1" />)}
      {gridY.map((y) => <path key={y} d={`M0 ${y + 0.5}H1976`} stroke="#90bcd8" strokeWidth="1" />)}
    </svg>
    <div className="absolute left-[205px] top-[29px] w-[1749px] h-[32px] flex items-center bg-[#191919] rounded-[2px] shadow-[0_14px_28px_rgba(0,0,0,0.3)] pl-[11px] pr-[14px]">
      <Close />
      <div className="ml-[10px] w-[14px] h-[3px] bg-[#a0a0a0]" />
      <span className="ml-[15px] text-[22px] leading-none text-[#cfcfcf]">资源管理器</span>
      <span className="ml-auto text-[20px] font-bold text-[#2a2a2a]">?</span>
    </div>
  </div>
);

const Center = () => (
  <div className="w-[2006px] shrink-0 flex flex-col bg-[#323232]">
    <div className="h-[56px] shrink-0 flex items-end bg-[#141414] pl-[7px]">
      <div className="w-[465px] h-[48px] flex items-center rounded-t-[10px] bg-[#323232] pl-[25px]">
        <svg width="22" height="22" viewBox="0 0 22 22" className="shrink-0">
          <path d="M2 2L20 20M20 2L2 20" stroke="#bdbdbd" strokeWidth="2.8" />
        </svg>
        <span className="ml-[7px] text-[28px] leading-none text-[#cfcfcf]">无标题 1</span>
      </div>
    </div>
    <TopBar />
    <SubBar />
    <TopRuler />
    <div className="flex-1 flex min-h-0">
      <SideRuler />
      <Canvas />
    </div>
  </div>
);

const NavTabIcons = [
  <LayersIcon key="l" w={27} h={26} />,
  <Ic key="s" w={32} h={28}>
    <path d="M2 2H30V20L22 26H2Z" fill="#8e8e8e" stroke="#111" strokeWidth="2" />
    <path d="M22 26V20H30" fill="#ddd" stroke="#111" strokeWidth="1" />
  </Ic>,
  <Ic key="f" w={28} h={26}>
    <path d="M2 7V2H8M20 2H26V7M2 19V24H8M20 24H26V19" fill="none" stroke="#a9ccff" strokeWidth="2.2" />
    <path d="M6 18L12 9L15 13L18 9L22 18Z" fill={L} />
  </Ic>,
  <Ic key="v" w={28} h={28}>
    <path d="M2 2H20L26 8V26H2Z" fill="#fff" stroke="#111" />
    <Eye x={14} y={14} s={0.85} />
  </Ic>,
  <Ic key="r" w={32} h={28}>
    <path d="M6 2H24L30 8V26H6Z" fill="#fff" stroke="#111" />
    <Two d="M3 18Q4 9 16 9M12 4L18 9L12 14" c="#fff" o="#111" w={3} />
    <path d="M6 2H24L30 8" fill="none" stroke="#111" strokeWidth="1" />
  </Ic>,
];

const NavSelect = ({ label, className = "" }) => (
  <div className={`flex items-center h-[26px] ${className}`}>
    <span className="w-[75px] pl-[9px] text-[18px] leading-none text-[#e0e0e0] whitespace-nowrap">{label[0]}:</span>
    <div className="w-[293px] h-[26px] flex rounded-[5px] overflow-hidden bg-[#666666]">
      <span className="flex-1 pl-[18px] text-[18.5px] leading-[26px] text-[#e4e4e4]">{label[1]}</span>
      <div className="w-[24px] flex items-center justify-center bg-[#1f63d6]">
        <svg width="14" height="20" viewBox="0 0 14 20">
          <path d="M2 7L7 2L12 7M2 13L7 18L12 13" fill="none" stroke="#fff" strokeWidth="1.8" />
        </svg>
      </div>
    </div>
  </div>
);

const tableCols = ["w-[5px]", "w-[32px]", "w-[32px]", "w-[34px]"];

const Right = () => (
  <div className="flex-1 flex flex-col bg-[#323232]">
    <PanelHead title="对象信息 - 形状" help />
    <div className="h-[52px] shrink-0 flex items-end bg-[#141414] pl-[8px]">
      <div className="w-[77px] h-[44px] flex items-center justify-center rounded-t-[10px] bg-[#323232] text-[22px] text-[#d8d8d8]">形状</div>
      <span className="ml-[14px] h-[36px] pr-[16px] border-r-2 border-[#555] text-[22px] leading-[34px] text-[#8c8c8c] mb-[4px]">数据</span>
      <span className="ml-[14px] h-[36px] pr-[16px] border-r-2 border-[#555] text-[22px] leading-[34px] text-[#8c8c8c] mb-[4px]">渲染</span>
    </div>
    <div className="h-[751px] shrink-0 pl-[3px] pt-[7px] text-[20px] font-medium text-[#cfcfcf]">没有选择</div>
    <div className="h-[34px] shrink-0 flex items-center pl-[5px] pb-[3px] bg-[#363636]">
      <span className="w-[55px] text-[18px] text-[#5e5e5e]">名称:</span>
      <div className="w-[309px] h-[30px] bg-[#3a3a3a] border border-[#444]" />
    </div>
    <Dots />
    <PanelHead title="导航 - 类" help />
    <div className="h-[52px] shrink-0 flex items-end bg-[#141414] pl-[8px]">
      <div className="w-[48px] h-[44px] flex items-center justify-center rounded-t-[10px] bg-[#323232]">
        <ClassIcon />
      </div>
      <div className="flex items-center h-[32px] mb-[6px]">
        {NavTabIcons.map((n, i) => (
          <div key={i} className="w-[46px] h-full flex items-center justify-center border-r-2 border-[#555] pl-[1px]">{n}</div>
        ))}
      </div>
    </div>
    <NavSelect label={["类选项", "显示/捕捉/修改其他"]} className="mt-[7px]" />
    <NavSelect label={["过滤器", "<所有类>"]} className="mt-[8px]" />
    <div className="mt-[7px] ml-[5px] w-[364px] h-[35px] flex items-center rounded-[6px] border-2 border-[#444] bg-[#3a3a3a]">
      <svg width="20" height="20" viewBox="0 0 20 20" className="ml-[11px]">
        <circle cx="8.5" cy="8.5" r="6.5" fill="none" stroke="#c8c8c8" strokeWidth="1.6" />
        <path d="M13 13L19 19" stroke="#c8c8c8" strokeWidth="1.6" />
      </svg>
      <span className="ml-[11px] text-[21px] leading-none text-[#6a6a6a]">搜索</span>
    </div>
    <div className="mt-[6px] flex-1 flex flex-col border-t-2 border-l-2 border-[#444]">
      <div className="h-[47px] shrink-0 flex items-center bg-[#2d2d2d] border-b-2 border-[#444]">
        <span className="w-[105px] pl-[8px] h-[36px] leading-[36px] border-r-2 border-[#444] text-[22px] text-[#e8e8e8]">可见性</span>
        <span className="w-[60px] h-[36px] border-r-2 border-[#444]" />
        <span className="pl-[8px] text-[22px] text-[#e8e8e8]">类名称</span>
      </div>
      <div className="relative flex-1 flex bg-[#1e1e1e]">
        {tableCols.map((w, i) => (
          <div key={i} className={`${w} h-full border-r-2 border-[#2d2d2d]`} />
        ))}
        <div className="absolute inset-x-0 top-0 flex flex-col pt-[2px]">
          {[["尺寸标注", false], ["无", true]].map(([t, on]) => (
            <div key={t} className="h-[30px] flex items-center">
              <Ic w={26} h={20} className="ml-[6px]"><Eye x={13} y={10} s={0.9} /></Ic>
              <span className="w-[112px] pl-[91px] text-[24px] font-bold leading-none text-[#ddd]">{on ? "✓" : ""}</span>
              <span className="ml-[52px] text-[18.5px] leading-none text-[#e4e4e4]">{t}</span>
            </div>
          ))}
        </div>
      </div>
      <div className="h-[22px] shrink-0 flex items-center bg-[#2b2b2b] border-t-2 border-[#333] pl-[6px]">
        <div className="w-[168px] h-[12px] rounded-full bg-[#6e6e6e]" />
      </div>
    </div>
  </div>
);

const statusIcons = [
  { tri: true, n: <Two d="M11 5V15M6 10H16M29 5V15M24 10H34M11 23V33M6 28H16M29 23V33M24 28H34" c={K} o={W} w={2.4} h={3} /> },
  { on: true, tri: true, n: <><Two d="M7 6H32V31H7Z" c={K} o={W} w={3.5} h={2.5} /><rect x="4" y="3" width="6" height="6" fill="#000" /><rect x="29" y="3" width="6" height="6" fill="#000" /><rect x="4" y="28" width="6" height="6" fill="#000" /></> },
  { on: true, tri: true, n: <><Two d="M7 3V32H34" c={K} o={W} w={2.5} h={2.5} /><path d="M7 32L30 8M7 12A20 20 0 0 1 28 32" fill="none" stroke="#000" strokeWidth="1.5" /></> },
  { on: true, n: <><Two d="M6 4L34 33M34 4L6 33" c={K} o={W} w={2.5} h={2.5} /><rect x="17" y="15" width="6" height="6" fill="#000" /></> },
  { on: true, tri: true, n: <><rect x="5" y="5" width="11" height="12" fill="#fff" stroke="#000" strokeWidth="2" /><rect x="8" y="8" width="5" height="5" fill="#000" /><path d="M18 11H38M11 19V36" stroke="#000" strokeWidth="4" strokeDasharray="5 3" /><path d="M18 11H38M11 19V36" stroke="#fff" strokeWidth="2" strokeDasharray="5 3" /></> },
  { tri: true, n: <><Two d="M6 34L34 4" c={K} o={W} w={2} h={2.5} /><rect x="13" y="20" width="6" height="6" transform="rotate(45 16 23)" fill="#000" stroke="#fff" /></> },
  { tri: true, n: <><Two d="M4 30L34 4" c={K} o={W} w={2} h={2.5} /><path d="M14 26L24 18L30 26L20 34Z" fill="none" stroke="#fff" strokeWidth="4" /><path d="M14 26L24 18L30 26L20 34Z" fill="none" stroke="#000" strokeWidth="2" /></> },
  { n: <Two d="M4 18Q12 8 22 16T26 36M14 2L38 30" c={K} o={W} w={2} h={2.5} /> },
  { n: <path d="M20 2L38 18L20 34L2 18ZM11 18L20 10L29 18L20 26ZM20 10V26M11 18H29" fill="none" stroke="#6a6a6a" strokeWidth="2.5" /> },
  { n: <><rect x="8" y="3" width="11" height="30" fill="#000" stroke="#fff" strokeWidth="2" /><rect x="21" y="3" width="11" height="30" fill="#000" stroke="#fff" strokeWidth="2" /></> },
  {
    n: (
      <>
        <circle cx="20" cy="18" r="12" fill="none" stroke="#fff" strokeWidth="9" />
        <circle cx="20" cy="18" r="10" fill="none" stroke="#000" strokeWidth="6" />
        <circle cx="20" cy="18" r="13" fill="none" stroke="#000" strokeWidth="4.5" strokeDasharray="7 6.6" />
        <circle cx="20" cy="18" r="3.5" fill="#fff" />
      </>
    ),
  },
];

const StatusBar = () => (
  <div className="h-[48px] shrink-0 flex items-center bg-[#323232] rounded-b-[10px] pl-[12px]">
    <span className="w-[419px] text-[22px] leading-none text-[#dcdcdc] whitespace-nowrap">{"如果希望寻求帮助， 按 F1 或单击 ?\u00a0\u00a0\u00a0图标"}</span>
    <span className="ml-[1374px] w-[213px] text-[24px] leading-none text-[#d8d8d8]">X: 2900</span>
    <span className="w-[208px] text-[24px] leading-none text-[#d8d8d8]">Y: 2635</span>
    <div className="flex gap-[4px]">
      {statusIcons.map((s, i) => (
        <div
          key={i}
          className={`relative w-[44px] h-[44px] flex items-center justify-center border-2 ${
            s.on ? "bg-[#8c8c8c] border-[#8c8c8c]" : "bg-[#474747] border-[#555555]"
          }`}
        >
          <Ic w={40} h={36}>
            {s.n}
          </Ic>
          {s.tri && <Tri className="absolute right-[0px] bottom-[0px]" />}
        </div>
      ))}
    </div>
  </div>
);

const TitleBar = () => (
  <div className="h-[44px] shrink-0 grid grid-cols-[1fr_auto_1fr] items-center border-t-2 border-[#6a6a6a] bg-[linear-gradient(#4a4a4a,#363636)] border-b-2 border-b-[#0e0e0e] rounded-t-[10px]">
    <div className="flex items-center pl-[16px]">
      <div className="w-[24px] h-[24px] rounded-full bg-[#5e5e5e] flex items-center justify-center">
        <div className="w-[7px] h-[7px] rounded-full bg-[#444]" />
      </div>
      <div className="ml-[16px] w-[24px] h-[24px] rounded-full bg-[#e4bb3c]" />
      <div className="ml-[16px] w-[24px] h-[24px] rounded-full bg-[#59bc3a]" />
      <span className="ml-[18px] pt-[2px] text-[25.6px] leading-none text-[#e6e6e6]">Vectorworks Design Suite 2022</span>
    </div>
    <span className="pt-[2px] text-[25.5px] leading-none text-[#9a9a9a]">无标题 1</span>
    <div className="flex items-center justify-end pr-[23px]">
      <Ic w={30} h={36} className="mr-[35px]"><Mag x={11} y={12} r={9} h="#aaa" /></Ic>
      <svg width="22" height="30" viewBox="0 0 22 30" className="mr-[37px]">
        <path d="M1 28Q2 2 11 2Q20 2 21 28Z" fill="#bdbdbd" stroke="#222" />
      </svg>
      <svg width="18" height="30" viewBox="0 0 18 30" className="mr-[12px]">
        <circle cx="9" cy="6" r="5" fill="#ccc" stroke="#222" />
        <path d="M2 12H16V29H2Z" fill="#cfcfcf" stroke="#222" />
        <path d="M6 12L9 18L12 12" fill="#333" />
      </svg>
      <span className="text-[24px] leading-none text-[#a8a8a8]">登录</span>
    </div>
  </div>
);

const menus = ["文件", "编辑", "视图", "修改", "模型", "AEC", "工具", "文本", "窗口", "云", "帮助"];

const MenuBar = () => (
  <div className="h-[46px] shrink-0 flex items-center bg-[linear-gradient(90deg,#24435f,#244360_70%,#2d4a68)] border-b border-black text-white pl-[9px] text-[28px] leading-none">
    <span className="w-[174px] text-[29px] font-bold whitespace-nowrap">Vectorworks</span>
    <div className="ml-[37px] flex gap-[38px]">
      {menus.map((m) => (
        <span key={m} className={`whitespace-nowrap ${m === "AEC" ? "w-[54px] text-[27px]" : ""}`}>{m}</span>
      ))}
    </div>
    <div className="ml-auto flex items-center pr-[46px]">
      <svg width="37" height="34" viewBox="0 0 37 34" className="shrink-0">
        <path d="M6 17A14 14 0 1 1 12 28" fill="none" stroke="#fff" strokeWidth="2" />
        <path d="M0 14H12L6 22Z" fill="#fff" />
        <path d="M20 9V18L26 23" fill="none" stroke="#fff" strokeWidth="2" />
      </svg>
      <svg width="36" height="30" viewBox="0 0 36 30" className="ml-[37px] shrink-0">
        <path d="M9 21H1V2H35V21H27" fill="none" stroke="#fff" strokeWidth="2" />
        <path d="M18 12L30 28H6Z" fill="#fff" />
      </svg>
      <svg width="18" height="34" viewBox="0 0 18 34" className="ml-[34px] shrink-0">
        <path d="M1 9L16 24L8 32V2L16 10L1 25" fill="none" stroke="#fff" strokeWidth="2" />
      </svg>
      <svg width="41" height="30" viewBox="0 0 41 30" className="ml-[30px] shrink-0">
        <path d="M2 10Q20 -6 39 10M8 16Q20 6 33 16M14 22Q20 16 27 22" fill="none" stroke="#fff" strokeWidth="3" />
        <path d="M16 25L20.5 21L25 25L20.5 30Z" fill="#fff" />
      </svg>
      <svg width="25" height="26" viewBox="0 0 25 26" className="ml-[21px] shrink-0">
        <path d="M0 8H6L14 1V25L6 18H0Z" fill="#fff" />
        <path d="M18 7Q22 13 18 19" fill="none" stroke="#fff" strokeWidth="2" />
      </svg>
      <span className="ml-[37px] w-[48px] text-[24px]">70%</span>
      <svg width="46" height="24" viewBox="0 0 46 24" className="ml-[10px] shrink-0">
        <rect x="1" y="1" width="39" height="22" rx="4" fill="none" stroke="#fff" strokeWidth="2" />
        <rect x="4" y="4" width="23" height="16" fill="#fff" />
        <path d="M43 8Q46 12 43 16Z" fill="#fff" />
      </svg>
      <span className="ml-[36px] w-[173px] text-[27.5px] whitespace-nowrap">Thu 10:17 AM</span>
      <svg width="32" height="28" viewBox="0 0 32 28" className="ml-[35px] shrink-0">
        <rect x="1" y="1" width="30" height="26" rx="3" fill="none" stroke="#fff" strokeWidth="2" />
        <path d="M4 5H28" stroke="#fff" strokeWidth="2" strokeDasharray="2 2" />
        <path d="M5 11H8V14H5ZM5 17H8V20H5ZM5 22H8V24H5ZM12 13H25V23H12ZM15 11V25M22 11V25M11 15H26M11 21H26" fill="none" stroke="#fff" strokeWidth="1.5" />
      </svg>
      <svg width="27" height="30" viewBox="0 0 27 30" className="ml-[45px] shrink-0">
        <circle cx="11" cy="11" r="9.5" fill="none" stroke="#fff" strokeWidth="2" />
        <path d="M17 18L26 29" stroke="#fff" strokeWidth="2.5" />
      </svg>
      <div className="ml-[36px] w-[32px] h-[32px] rounded-full border-2 border-white bg-[conic-gradient(#ee55bb,#8855ee,#44aaee,#44ddcc,#ee88cc,#ee55bb)] flex items-center justify-center">
        <div className="w-[8px] h-[8px] rounded-full bg-white" />
      </div>
      <div className="ml-[24px] w-[36px] flex flex-col gap-[7px]">
        <div className="flex gap-[5px]"><div className="w-[5px] h-[5px] bg-white" /><div className="flex-1 h-[5px] bg-white" /></div>
        <div className="flex gap-[5px]"><div className="w-[5px] h-[5px] bg-white" /><div className="flex-1 h-[5px] bg-white" /></div>
        <div className="flex gap-[5px]"><div className="w-[5px] h-[5px] bg-white" /><div className="flex-1 h-[5px] bg-white" /></div>
      </div>
    </div>
  </div>
);

export default function App() {
  return (
    <div className="w-[2780px] h-[1800px] flex flex-col overflow-hidden bg-[#1d3448] font-['Liberation_Sans','Noto_Sans_CJK_SC',sans-serif]">
      <MenuBar />
      <div className="flex-1 min-h-0 flex flex-col">
        <TitleBar />
        <div className="flex-1 min-h-0 flex">
          <LeftColumn />
          <GutterDots top="pt-[808px]" />
          <Center />
          <GutterDots top="pt-[808px]" />
          <Right />
        </div>
        <StatusBar />
      </div>
    </div>
  );
}
